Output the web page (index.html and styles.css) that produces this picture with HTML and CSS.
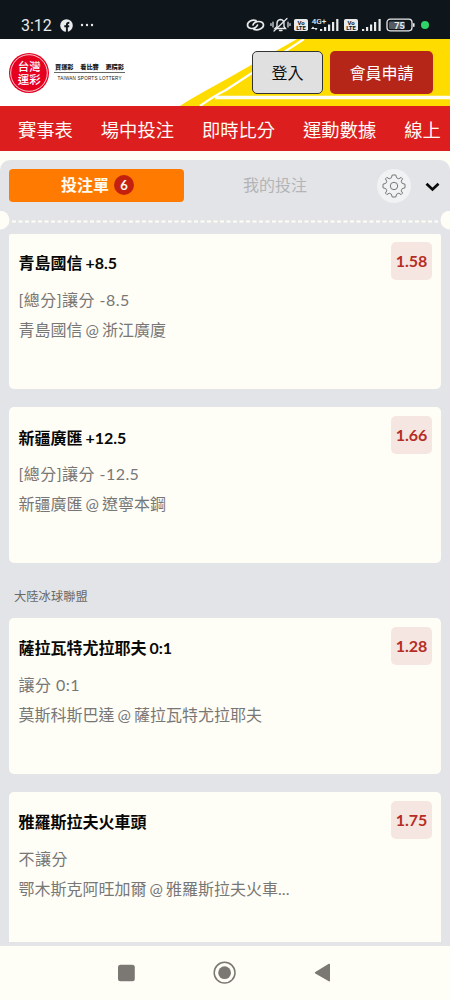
FILE: index.html
```html
<!DOCTYPE html>
<html lang="zh-Hant">
<head>
<meta charset="utf-8">
<title>台灣運彩</title>
<link rel="stylesheet" href="styles.css">
</head>
<body>
<div class="screen">
  <div class="status">
    <span class="time">3:12</span>
    <svg class="fb" width="13" height="13" viewBox="0 0 13 13"><circle cx="6.5" cy="6.5" r="6.3" fill="#e8eaec"/><path d="M6.900 13V6Q6.900 3.700 9.300 3.700M4.300 7.200H9.200" fill="none" stroke="#0f161b" stroke-width="1.900"/></svg>
    <svg class="dots" width="14" height="4" viewBox="0 0 14 4" fill="#e8eaec"><circle cx="2" cy="2" r="1.2"/><circle cx="7" cy="2" r="1.2"/><circle cx="12" cy="2" r="1.2"/></svg>
    <svg class="sys" width="188" height="20" viewBox="0 0 188 20">
      <g fill="none" stroke="#e8eaec" stroke-width="1.7" stroke-linecap="round">
        <path d="M10 5.6C6 4.2 1.500 6.600 1.500 10S6 14.500 9.500 12.400Q11 11.500 11.500 10M8 14.400C12 15.800 17.500 13.400 17.500 10S12.500 5.500 9 7.600Q7.500 8.500 7 10"/>
        <path d="M29 13.500H39.500L38 11.500V8.500Q38 5 34.500 4.500Q31 5 31 8.500V11.500Z M33.500 15.500H36" stroke-width="1.4"/>
        <path d="M28 16L41 3.500M27 7V12M25 8.500V10.500M42 7V12M44 8.500V10.500" stroke-width="1.2"/>
      </g>
      <g fill="#e8eaec">
        <rect x="48" y="4" width="14" height="12" rx="1.8"/>
        <rect x="98" y="4" width="14" height="12" rx="1.8"/>
        <path d="M67 11.500L69 14H65ZM70 15.500L68.500 13H71.500Z"/>
        <path d="M74 14h2.200v2h-2.200zM78 12h2.200v4h-2.200zM82 9.500h2.200v6.500h-2.200zM86 7h2.200v9h-2.200zM90.200 4h2.200v12h-2.200zM116 14h2.200v2h-2.200zM120 12h2.200v4h-2.200zM124 9.500h2.200v6.500h-2.200zM128 7h2.200v9h-2.200zM132.500 4h2.200v12h-2.200z"/>
        <rect x="143" y="6.500" width="16" height="7.500" rx="1.500" fill="#555b60"/>
        <rect x="167" y="8" width="1.600" height="4" rx=".8"/>
      </g>
      <rect x="141" y="4.200" width="25" height="11.600" rx="3.200" fill="none" stroke="#e8eaec" stroke-width="1.300"/>
      <g class="micro" text-anchor="middle">
        <text x="55" y="9.700" fill="#0f161b">Vo</text><text x="55" y="15.300" fill="#0f161b">LTE</text>
        <text x="105" y="9.700" fill="#0f161b">Vo</text><text x="105" y="15.300" fill="#0f161b">LTE</text>
        <text class="net" x="73" y="9.200" fill="#e8eaec">4G+</text>
        <text class="pct" x="153.500" y="13.600" fill="#e8eaec">75</text>
      </g>
      <circle cx="179" cy="10" r="4" fill="#2fd566"/>
    </svg>
  </div>

  <header class="header">
    <svg class="stripes" width="270" height="67" viewBox="180 39 270 67">
      <path d="M180 106Q190 99 225 80L297 39H450V106Z" fill="#ffdc00"/>
      <path d="M200 106Q214 96 226 90L304 39" fill="none" stroke="#fff" stroke-width="2.200"/>
      <path d="M215 97.500H450" stroke="#fffef4" stroke-width="3.500"/>
    </svg>
    <div class="brand">
      <svg width="40" height="40" viewBox="0 0 40 40">
        <circle cx="20" cy="20" r="20" fill="#e5001f"/>
        <circle cx="20" cy="20" r="18.300" fill="none" stroke="#fff" stroke-width=".8"/>
        <text class="seal" x="20.200" y="18" text-anchor="middle">台灣</text>
        <text class="seal" x="20.200" y="30.800" text-anchor="middle">運彩</text>
      </svg>
      <div class="slogan">
        <div class="words"><span>買運彩</span><span>看比賽</span><span>更精彩</span></div>
        <svg width="71" height="10" viewBox="0 0 71 10"><text class="en" x="35.500" y="6.500" text-anchor="middle" textLength="64">TAIWAN SPORTS LOTTERY</text></svg>
      </div>
    </div>
    <div class="actions">
      <button class="btn login">登入</button>
      <button class="btn join">會員申請</button>
    </div>
  </header>

  <nav class="menu"><span>賽事表</span><span>場中投注</span><span>即時比分</span><span>運動數據</span><span>線上</span></nav>

  <main class="panel">
    <div class="tabs">
      <div class="tab active">投注單<span class="count">6</span></div>
      <div class="tab">我的投注</div>
      <div class="gear"><svg width="24" height="24" viewBox="-12 -12 24 24" fill="none" stroke="#777" stroke-width="1"><path d="M-1.800 -11H1.800L2.600 -8.200L4.800 -7.200L7.100 -8.600L8.600 -7.100L7.200 -4.800L8.200 -2.600L11 -1.800V1.800L8.200 2.600L7.200 4.800L8.600 7.100L7.100 8.600L4.800 7.200L2.600 8.200L1.800 11H-1.800L-2.600 8.200L-4.800 7.200L-7.100 8.600L-8.600 7.100L-7.200 4.800L-8.200 2.600L-11 1.800V-1.800L-8.200 -2.600L-7.200 -4.800L-8.600 -7.100L-7.100 -8.600L-4.800 -7.200L-2.600 -8.200Z" stroke-linejoin="round"/><circle r="3.700"/></svg></div>
      <svg class="chev" width="15" height="10" viewBox="0 0 15 10"><path d="M1.500 1.800L7.500 7.500L13.500 1.800" fill="none" stroke="#0a0a0a" stroke-width="2.700"/></svg>
    </div>
    <svg class="perf" width="450" height="20" viewBox="0 0 450 20"><path d="M12 10.500H438" stroke="#fffef6" stroke-width="2" stroke-dasharray="4 2.500"/><circle cx="0" cy="9" r="9.500" fill="#fffef6"/><circle cx="450" cy="9" r="9.500" fill="#fffef6"/></svg>

    <section class="bets">
      <article class="card first"><div class="info"><h2>青島國信 +8.5</h2><p class="type">[總分]讓分 -8.5</p><p class="match">青島國信 @ 浙江廣廈</p></div><div class="odds">1.58</div></article>
      <article class="card"><div class="info"><h2>新疆廣匯 +12.5</h2><p class="type">[總分]讓分 -12.5</p><p class="match">新疆廣匯 @ 遼寧本鋼</p></div><div class="odds">1.66</div></article>
      <h3 class="league">大陸冰球聯盟</h3>
      <article class="card"><div class="info"><h2>薩拉瓦特尤拉耶夫 0:1</h2><p class="type">讓分 0:1</p><p class="match">莫斯科斯巴達 @ 薩拉瓦特尤拉耶夫</p></div><div class="odds">1.28</div></article>
      <article class="card last"><div class="info"><h2>雅羅斯拉夫火車頭</h2><p class="type">不讓分</p><p class="match">鄂木斯克阿旺加爾 @ 雅羅斯拉夫火車...</p></div><div class="odds">1.75</div></article>
    </section>
  </main>

  <footer class="sysnav">
    <svg width="450" height="54" viewBox="0 946 450 54" fill="#7b7773"><rect x="118" y="964.700" width="16.800" height="16.500" rx="2.500"/><circle cx="224.600" cy="972.700" r="6.400"/><circle cx="224.600" cy="972.700" r="10.400" fill="none" stroke="#7b7773" stroke-width="1.500"/><path d="M315.300 972L328.800 963.800Q330 963.200 330 964.700V980.500Q330 982 328.800 981.300L315.300 973.500Q314.200 972.700 315.300 972Z"/></svg>
  </footer>
</div>
</body>
</html>
```
FILE: styles.css
```css
* { box-sizing: border-box; }
body { margin: 0; font-family: Lato, "Noto Sans CJK TC", sans-serif; }
h2, h3, p { margin: 0; font-weight: 400; }
.screen { width: 450px; height: 1000px; overflow: hidden; display: flex; flex-direction: column; background: #fffef6; }

.status { height: 39px; flex: none; background: #0f161b; color: #e8eaec; display: flex; align-items: center; padding: 11px 16px 0 21px; }
.time { font: 16px/20px Roboto, sans-serif; width: 39px; padding-top: 1px; }
.dots { margin-left: 7px; }
.sys { margin-left: auto; }
.micro text { font: 700 6px Roboto, sans-serif; }
.micro .net { font-size: 8px; font-weight: 500; }
.micro .pct { font-size: 9px; }

.header { height: 67px; flex: none; position: relative; background: #fff; display: flex; justify-content: space-between; align-items: center; padding: 0 17px 0 9px; }
.stripes { position: absolute; right: 0; top: 0; }
.brand { display: flex; gap: 5px; }
.seal { font: 500 11.5px "Noto Sans CJK TC", sans-serif; fill: #fff; }
.slogan { width: 71px; padding-top: 8px; }
.words { display: flex; justify-content: space-between; height: 12px; padding: 0 1px; border-bottom: 1px solid #666; font: 900 6.200px/12px "Noto Sans CJK TC", sans-serif; color: #222; }
.slogan svg { display: block; }
.en { font: 400 4.600px "Liberation Sans", sans-serif; fill: #111; }
.actions { display: flex; gap: 7px; position: relative; }
.btn { height: 43px; border-radius: 5px; padding: 0; font: 16px/24px Lato, "Noto Sans CJK TC", sans-serif; }
.login { width: 71px; background: #e0e0e0; border: 1px solid #333; color: #111; }
.join { width: 103px; background: #b52619; border: 0; color: #fff; }

.menu { height: 45px; flex: none; background: #dc1e1e; color: #fffaf5; display: flex; gap: 28px; padding-left: 18px; font-size: 18.300px; line-height: 48px; white-space: nowrap; }

.panel { flex: none; margin-top: 9px; height: 786px; background: #e3e4e7; border-radius: 10px 10px 0 0; overflow: hidden; display: flex; flex-direction: column; }
.tabs { height: 51px; flex: none; display: flex; align-items: center; padding-left: 9px; }
.tab { width: 175px; height: 33px; display: flex; align-items: center; justify-content: center; font-size: 16px; line-height: 22px; padding-bottom: 1px; color: #b3b4b6; }
.active { background: #ff7a00; color: #fffaf0; border-radius: 4px; font-weight: 700; gap: 5px; padding-left: 2px; }
.tab + .tab { width: 182px; }
.count { width: 20px; height: 20px; border-radius: 50%; background: #c3200f; font-size: 13px; line-height: 20px; text-align: center; }
.gear { width: 34px; height: 34px; margin-left: 11px; border-radius: 50%; background: #f1f2f4; display: grid; place-items: center; }
.chev { margin: 3px 0 0 14px; }
.perf { display: block; flex: none; }
.bets { padding: 3px 9px 0; display: flex; flex-direction: column; }
.card { height: 156px; margin-bottom: 18.500px; flex: none; background: #fffef6; border-radius: 5px; display: flex; justify-content: space-between; padding: 9px 9px 0 9.500px; }
.first { height: 155px; margin-bottom: 18px; border-radius: 2px 2px 5px 5px; padding-top: 7.500px; }
.last { height: 150px; margin-bottom: 0; border-radius: 5px 5px 0 0; padding-top: 8.500px; }
.info { color: #777; font-size: 16px; line-height: 30px; padding-top: 6.500px; white-space: nowrap; }
.info h2 { font-size: 16px; font-weight: 700; color: #080808; line-height: 30px; margin-bottom: 6.500px; word-spacing: -1px; }
.type { letter-spacing: .45px; }
.match { word-spacing: -1px; }
.odds { width: 41px; height: 38px; border-radius: 5px; background: #f6e6e1; color: #b52d24; font-weight: 700; font-size: 16px; line-height: 37px; text-align: center; }
.league { height: 36px; font-size: 12.300px; line-height: 29px; padding-left: 5px; color: #696969; }
.sysnav { height: 54px; flex: none; background: #fffef6; }
.sysnav svg { display: block; }
```
